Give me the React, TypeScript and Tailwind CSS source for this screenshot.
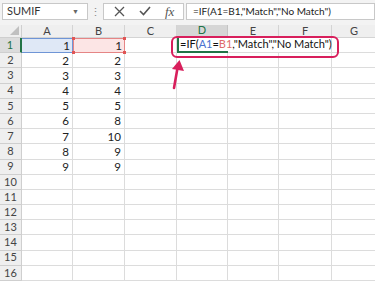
import React from 'react';

const cols = [
  { k: 'A', w: 'w-[51px]' },
  { k: 'B', w: 'w-[52px]' },
  { k: 'C', w: 'w-[52px]' },
  { k: 'D', w: 'w-[51px]' },
  { k: 'E', w: 'w-[51px]' },
  { k: 'F', w: 'w-[53px]' },
  { k: 'G', w: 'w-[45px]' },
];

const colA = [1, 2, 3, 4, 5, 6, 7, 8, 9];
const colB = [1, 2, 3, 4, 5, 8, 10, 9, 9];

const rows = Array.from({ length: 16 }, (_, i) => i + 1);

function Toolbar() {
  return (
    <div className="h-[22px] flex items-center pl-[2px] bg-[#f3f3f3]">
      <div className="w-[86px] h-[17px] bg-white border border-[#c8c8c8] flex items-center justify-between pl-[4px] pr-[8px]">
        <span className="text-[11px] text-[#333]">SUMIF</span>
        <span className="text-[7px] text-[#666]">▼</span>
      </div>
      <div className="w-[15px] flex justify-center text-[11px] text-[#888] leading-none">⋮</div>
      <div className="w-[81px] h-[17px] bg-white border border-[#c8c8c8] flex items-center pl-[10px] gap-[14px]">
        <svg width="11" height="11" viewBox="0 0 11 11">
          <path d="M1 1 L10 10 M10 1 L1 10" stroke="#555" strokeWidth="1.3" />
        </svg>
        <svg width="12" height="10" viewBox="0 0 12 10">
          <path d="M1 5 L4.5 8.5 L11 1" stroke="#555" strokeWidth="1.6" fill="none" />
        </svg>
        <span className="text-[13px] italic text-[#555] leading-none" style={{ fontFamily: '"Liberation Serif", serif' }}>
          fx
        </span>
      </div>
      <div className="flex-1 h-[17px] bg-white border border-[#c8c8c8] ml-[2px] flex items-center pl-[6px]">
        <span className="text-[10px] text-[#222] whitespace-nowrap">=IF(A1=B1,"Match","No Match")</span>
      </div>
    </div>
  );
}

function HeaderRow() {
  return (
    <div className="flex h-[13px] mt-[3px]">
      <div className="w-[22px] shrink-0 bg-[#efefef] border-r border-b border-[#cfcfcf] relative">
        <div className="absolute right-[2px] bottom-[2px] w-0 h-0 border-l-[9px] border-l-transparent border-b-[9px] border-b-[#c0c0c0]" />
      </div>
      {cols.map((c) =>
        c.k === 'D' ? (
          <div
            key={c.k}
            className={`${c.w} shrink-0 bg-[#d6d6d6] border-r border-[#c4c4c4] border-b-2 border-b-[#217346] flex items-center justify-center text-[11px] text-[#217346]`}
          >
            {c.k}
          </div>
        ) : (
          <div
            key={c.k}
            className={`${c.w} shrink-0 bg-[#efefef] border-r border-b border-[#d4d4d4] flex items-center justify-center text-[11px] text-[#444]`}
          >
            {c.k}
          </div>
        ),
      )}
    </div>
  );
}

function Formula() {
  return (
    <span className="whitespace-nowrap text-[11px] text-[#111]">
      =IF(<span className="text-[#4a72d0]">A1</span>=<span className="text-[#e06a6a]">B1</span>,"Match","No Match")
    </span>
  );
}

function Row({ n }: { n: number }) {
  const a = colA[n - 1];
  const b = colB[n - 1];
  const first = n === 1;
  return (
    <div className="flex h-[15.2px]">
      <div
        className={
          first
            ? 'w-[22px] shrink-0 bg-[#dcdcdc] border-r-2 border-r-[#217346] border-b border-[#cfcfcf] flex items-center justify-center text-[11px] text-[#217346]'
            : 'w-[22px] shrink-0 bg-[#efefef] border-r border-b border-[#cfcfcf] flex items-center justify-center text-[11px] text-[#444]'
        }
      >
        {n}
      </div>
      {first ? (
        <>
          <div className="w-[51px] shrink-0 bg-[#dfe8f6] border border-[#6f95d6] border-l-0 flex items-center justify-end pr-[2px] text-[11.6px] text-[#222]">
            {a}
          </div>
          <div className="w-[52px] shrink-0 bg-[#fce5e5] border border-[#e58585] flex items-center justify-end pr-[2px] text-[11.6px] text-[#222] relative">
            {b}
            <span className="absolute -left-[2px] -top-[2px] w-[3px] h-[3px] bg-[#e05555]" />
            <span className="absolute -right-[2px] -top-[2px] w-[3px] h-[3px] bg-[#e05555]" />
            <span className="absolute -left-[2px] -bottom-[2px] w-[3px] h-[3px] bg-[#e05555]" />
            <span className="absolute -right-[2px] -bottom-[2px] w-[3px] h-[3px] bg-[#e05555]" />
          </div>
          <div className="w-[52px] shrink-0 bg-white border-r border-b border-[#dcdcdc]" />
          <div className="w-[51px] shrink-0 bg-white border-l-2 border-b-2 border-[#217346] flex items-center pl-[1px] relative z-10 overflow-visible">
            <Formula />
          </div>
          <div className="w-[51px] shrink-0 bg-white border-b border-[#dcdcdc]" />
          <div className="w-[53px] shrink-0 bg-white border-r border-b border-[#dcdcdc]" />
          <div className="w-[45px] shrink-0 bg-white border-r border-b border-[#dcdcdc]" />
        </>
      ) : (
        cols.map((c) => (
          <div
            key={c.k}
            className={`${c.w} shrink-0 bg-white border-r border-b border-[#dcdcdc] flex items-center justify-end pr-[3px] text-[11.6px] text-[#222]`}
          >
            {c.k === 'A' ? a : c.k === 'B' ? b : ''}
          </div>
        ))
      )}
    </div>
  );
}

export default function App() {
  return (
    <div
      className="w-[375px] h-[281px] overflow-hidden bg-[#f3f3f3] relative"
      style={{ fontFamily: 'Lato, "Open Sans", sans-serif' }}
    >
      <Toolbar />
      <HeaderRow />
      <div className="flex flex-col">
        {rows.map((n) => (
          <Row key={n} n={n} />
        ))}
      </div>

      {/* annotation */}
      <div className="absolute left-[171px] top-[36px] w-[168px] h-[22px] rounded-[6px] border-[2.5px] border-[#d81f5c] z-20" />
      <svg className="absolute left-[166px] top-[58px] z-20" width="20" height="32" viewBox="0 0 20 32">
        <path d="M8 30 L11.5 10" stroke="#d81f5c" strokeWidth="2.6" strokeLinecap="round" />
        <path d="M13.5 2 L18 13 L6 11 Z" fill="#d81f5c" />
      </svg>
    </div>
  );
}
